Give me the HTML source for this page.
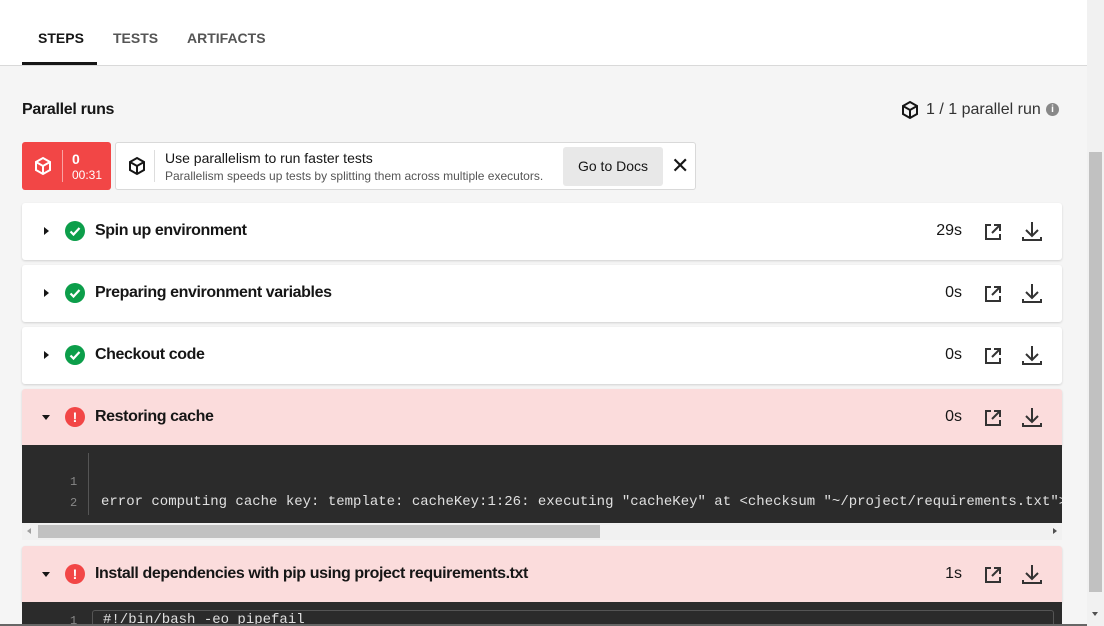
<!DOCTYPE html>
<html><head><style>
*{box-sizing:border-box;margin:0;padding:0}
body{width:1104px;height:626px;overflow:hidden;background:#f5f5f5;font-family:"Liberation Sans",sans-serif;color:#161616;position:relative}
.hdr{position:absolute;left:0;top:0;width:1087px;height:66px;background:#fff;border-bottom:1px solid #d9d9d9}
.tab{position:absolute;top:30px;font-size:14px;font-weight:bold;color:#555}
.ul{position:absolute;left:22px;top:62px;width:75px;height:3px;background:#161616}
.abs{position:absolute}
.row{position:absolute;left:22px;width:1040px;height:57px;background:#fff;border-radius:3px;box-shadow:0 1px 2px rgba(0,0,0,.15)}
.row.err{background:#fbdcdc;border-radius:3px 3px 0 0}
.row .t{position:absolute;left:73px;top:19px;font-size:16px;font-weight:bold;letter-spacing:-0.4px}
.row .tri{position:absolute;left:22px;top:24px;width:0;height:0;border-top:4px solid transparent;border-bottom:4px solid transparent;border-left:5px solid #161616}
.row.err .tri{left:20px;top:26px;border-left:4px solid transparent;border-right:4px solid transparent;border-top:5px solid #161616;border-bottom:0}
.ic{position:absolute;left:43px;top:18px;width:20px;height:20px;border-radius:50%}
.row .d{position:absolute;right:100px;top:19px;font-size:16px}
.row svg.o{position:absolute;left:961px;top:19px}
.row svg.dl{position:absolute;left:998px;top:16px}
.code{position:absolute;left:22px;width:1040px;background:#2b2b2b;font-family:"Liberation Mono",monospace;font-size:14px;color:#e0e0e0}
.ln{position:absolute;color:#888;font-size:12px}
</style></head><body>
<div class="hdr">
<div class="tab" style="left:38px;color:#161616">STEPS</div>
<div class="tab" style="left:113px">TESTS</div>
<div class="tab" style="left:187px">ARTIFACTS</div>
<div class="ul"></div>
</div>
<div class="abs" style="left:22px;top:101px;font-size:16px;font-weight:bold;letter-spacing:-0.3px">Parallel runs</div>
<svg class="abs" style="left:900px;top:100px" width="20" height="20" viewBox="0 0 20 20" fill="none" stroke="#161616" stroke-width="2"><path d="M10 2l7 4v8l-7 4-7-4V6z M3 6l7 4 7-4 M10 10v8"/></svg>
<div class="abs" style="left:926px;top:101px;font-size:16px;color:#333">1 / 1 parallel run</div>
<div class="abs" style="left:1046px;top:103px;width:13px;height:13px;border-radius:50%;background:#888;color:#fff;font-size:10px;font-weight:bold;text-align:center;line-height:13px">i</div>

<div class="abs" style="left:22px;top:142px;width:89px;height:48px;background:#f24646;border-radius:3px;color:#fff">
<svg class="abs" style="left:11px;top:14px" width="20" height="20" viewBox="0 0 20 20" fill="none" stroke="#fff" stroke-width="2"><path d="M10 2l7 4v8l-7 4-7-4V6z M3 6l7 4 7-4 M10 10v8"/></svg>
<div class="abs" style="left:40px;top:8px;width:1px;height:32px;background:rgba(255,255,255,.5)"></div>
<div class="abs" style="left:50px;top:9px;font-size:14px;font-weight:bold">0</div>
<div class="abs" style="left:50px;top:26px;font-size:12px">00:31</div>
</div>
<div class="abs" style="left:115px;top:142px;width:581px;height:48px;background:#fff;border:1px solid #d9d9d9;border-radius:3px">
<svg class="abs" style="left:11px;top:13px" width="20" height="20" viewBox="0 0 20 20" fill="none" stroke="#161616" stroke-width="2"><path d="M10 2l7 4v8l-7 4-7-4V6z M3 6l7 4 7-4 M10 10v8"/></svg>
<div class="abs" style="left:38px;top:7px;width:1px;height:32px;background:#ddd"></div>
<div class="abs" style="left:49px;top:7px;font-size:14px">Use parallelism to run faster tests</div>
<div class="abs" style="left:49px;top:26px;font-size:12px;color:#555">Parallelism speeds up tests by splitting them across multiple executors.</div>
<div class="abs" style="left:447px;top:4px;width:100px;height:39px;background:#e8e8e8;border-radius:3px;font-size:14px;text-align:center;line-height:39px">Go to Docs</div>
<div class="abs" style="left:555px;top:10px;font-size:22px">✕</div>
</div>

<div class="row" style="top:203px"><div class="tri"></div><div class="ic" style="background:#0c9e4a"><svg width="20" height="20"><path d="M5.5 10.5l3 3 6-6.5" stroke="#fff" stroke-width="2.2" fill="none"/></svg></div><div class="t">Spin up environment</div><div class="d">29s</div>
<svg class="o" width="20" height="20" viewBox="0 0 20 20" fill="none" stroke="#333" stroke-width="2"><path d="M8 3H3v14h14v-5 M11 3h6v6 M17 3l-8 8"/></svg><svg class="dl" width="24" height="24" viewBox="0 0 24 24" fill="none" stroke="#333" stroke-width="2"><path d="M12 3v13 M6 11l6 6 6-6 M3 18v3h18v-3"/></svg></div>
<div class="row" style="top:265px"><div class="tri"></div><div class="ic" style="background:#0c9e4a"><svg width="20" height="20"><path d="M5.5 10.5l3 3 6-6.5" stroke="#fff" stroke-width="2.2" fill="none"/></svg></div><div class="t">Preparing environment variables</div><div class="d">0s</div>
<svg class="o" width="20" height="20" viewBox="0 0 20 20" fill="none" stroke="#333" stroke-width="2"><path d="M8 3H3v14h14v-5 M11 3h6v6 M17 3l-8 8"/></svg><svg class="dl" width="24" height="24" viewBox="0 0 24 24" fill="none" stroke="#333" stroke-width="2"><path d="M12 3v13 M6 11l6 6 6-6 M3 18v3h18v-3"/></svg></div>
<div class="row" style="top:327px"><div class="tri"></div><div class="ic" style="background:#0c9e4a"><svg width="20" height="20"><path d="M5.5 10.5l3 3 6-6.5" stroke="#fff" stroke-width="2.2" fill="none"/></svg></div><div class="t">Checkout code</div><div class="d">0s</div>
<svg class="o" width="20" height="20" viewBox="0 0 20 20" fill="none" stroke="#333" stroke-width="2"><path d="M8 3H3v14h14v-5 M11 3h6v6 M17 3l-8 8"/></svg><svg class="dl" width="24" height="24" viewBox="0 0 24 24" fill="none" stroke="#333" stroke-width="2"><path d="M12 3v13 M6 11l6 6 6-6 M3 18v3h18v-3"/></svg></div>
<div class="row err" style="top:389px"><div class="tri"></div><div class="ic" style="background:#f24646;color:#fff;font-weight:bold;font-size:14px;text-align:center;line-height:20px">!</div><div class="t">Restoring cache</div><div class="d">0s</div>
<svg class="o" width="20" height="20" viewBox="0 0 20 20" fill="none" stroke="#333" stroke-width="2"><path d="M8 3H3v14h14v-5 M11 3h6v6 M17 3l-8 8"/></svg><svg class="dl" width="24" height="24" viewBox="0 0 24 24" fill="none" stroke="#333" stroke-width="2"><path d="M12 3v13 M6 11l6 6 6-6 M3 18v3h18v-3"/></svg></div>
<div class="code" style="top:445px;height:78px;overflow:hidden">
<div class="abs" style="left:66px;top:8px;width:1px;height:62px;background:#555"></div>
<div class="ln" style="left:48px;top:30px">1</div>
<div class="ln" style="left:48px;top:51px">2</div>
<div class="abs" style="left:79px;top:49px;white-space:nowrap">error computing cache key: template: cacheKey:1:26: executing "cacheKey" at &lt;checksum "~/project/requirements.txt"&gt;</div>
</div>
<div class="abs" style="left:22px;top:523px;width:1040px;height:17px;background:#f1f1f1"><div class="abs" style="left:16px;top:2px;width:562px;height:13px;background:#c1c1c1"></div><div class="abs" style="left:5px;top:5px;border-top:3px solid transparent;border-bottom:3px solid transparent;border-right:4px solid #a0a0a0"></div><div class="abs" style="right:5px;top:5px;border-top:3px solid transparent;border-bottom:3px solid transparent;border-left:4px solid #505050"></div></div>
<div class="row err" style="top:546px"><div class="tri"></div><div class="ic" style="background:#f24646;color:#fff;font-weight:bold;font-size:14px;text-align:center;line-height:20px">!</div><div class="t">Install dependencies with pip using project requirements.txt</div><div class="d">1s</div>
<svg class="o" width="20" height="20" viewBox="0 0 20 20" fill="none" stroke="#333" stroke-width="2"><path d="M8 3H3v14h14v-5 M11 3h6v6 M17 3l-8 8"/></svg><svg class="dl" width="24" height="24" viewBox="0 0 24 24" fill="none" stroke="#333" stroke-width="2"><path d="M12 3v13 M6 11l6 6 6-6 M3 18v3h18v-3"/></svg></div>
<div class="code" style="top:602px;height:24px;overflow:hidden">
<div class="ln" style="left:48px;top:12px">1</div>
<div class="abs" style="left:70px;top:8px;width:962px;height:30px;border:1px solid #555;border-radius:3px"></div>
<div class="abs" style="left:81px;top:10px">#!/bin/bash -eo pipefail</div>
</div>
<div class="abs" style="left:0;top:624px;width:1104px;height:2px;background:#666"></div>
<div class="abs" style="left:1087px;top:0;width:17px;height:626px;background:#f1f1f1"><div class="abs" style="left:2px;top:152px;width:13px;height:440px;background:#c1c1c1"></div><div class="abs" style="left:5px;top:612px;border-left:3px solid transparent;border-right:3px solid transparent;border-top:4px solid #505050"></div></div>
</body></html>
